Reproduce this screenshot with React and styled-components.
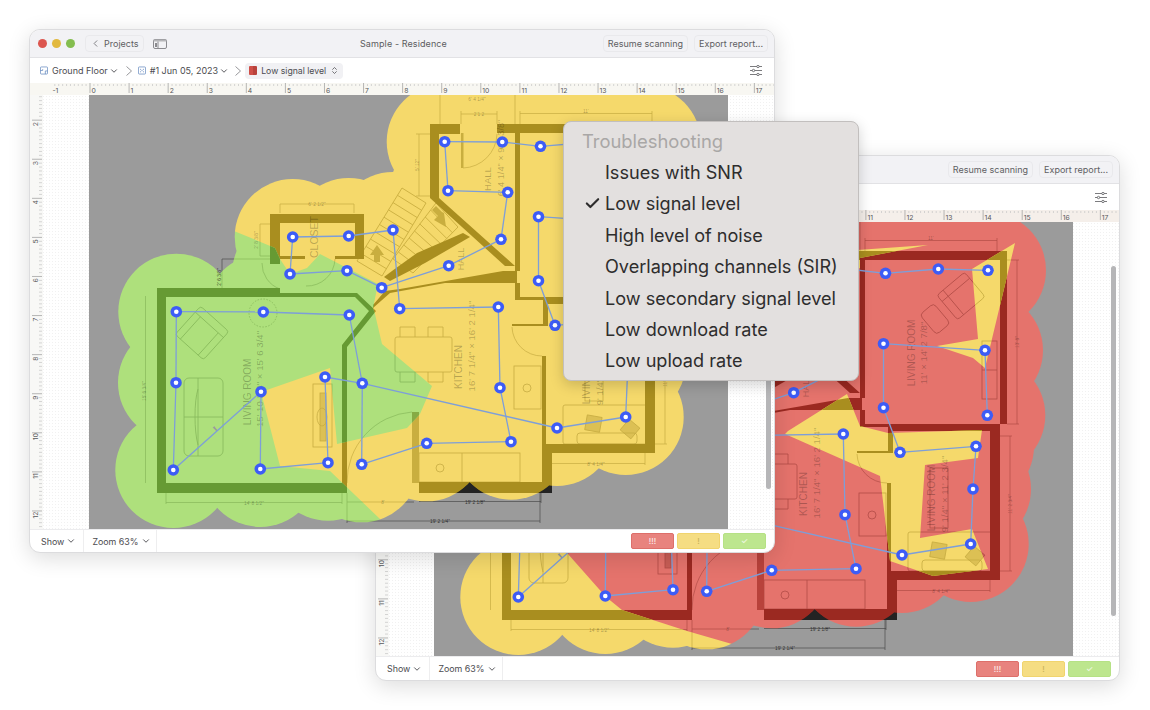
import React from "react";
import styled, { createGlobalStyle } from "styled-components";
import { ChevronLeft, ChevronDown, ChevronsUpDown, Check } from "lucide-react";

const GlobalStyle = createGlobalStyle`
  html, body {
    margin: 0;
    background: #fff;
    font-family: Inter, "Noto Sans", sans-serif;
    overflow: hidden;
  }
`;

const Desktop = styled.div`
  position: relative;
  width: 1150px;
  height: 710px;
`;

const Win = styled.div`
  position: absolute;
  left: ${(p) => p.$left}px;
  top: ${(p) => p.$top}px;
  width: ${(p) => p.$width}px;
  height: ${(p) => p.$height}px;
  display: flex;
  flex-direction: column;
  box-sizing: border-box;
  background: #fff;
  border: 1px solid #dcdcde;
  border-radius: 11px;
  overflow: hidden;
  box-shadow: 0 5px 22px rgba(0, 0, 0, 0.14);
`;

const TitleBar = styled.div`
  position: relative;
  flex: 0 0 27px;
  display: flex;
  align-items: center;
  padding: 0 6px 0 8px;
  background: #f2f2f5;
  border-bottom: 1px solid #e2e2e5;
`;

const Light = styled.span`
  width: 9px;
  height: 9px;
  border-radius: 50%;
  margin-right: 5px;
  background: ${(p) => p.$color};
`;

const BarButton = styled.div`
  display: flex;
  align-items: center;
  gap: 3px;
  height: 15px;
  margin-left: ${(p) => p.$gap || 0}px;
  margin-right: ${(p) => p.$after || 0}px;
  padding: 0 4px;
  border: 1px solid #e9e9ec;
  border-radius: 4px;
  font-size: 9px;
  color: #5e5e62;
  white-space: nowrap;
`;

const Title = styled.div`
  position: absolute;
  left: 330px;
  top: 8px;
  font-size: 9px;
  letter-spacing: 0.1px;
  color: #5c5c60;
`;

const Spacer = styled.div`
  flex: 1;
`;

const Toolbar = styled.div`
  flex: 0 0 ${(p) => p.$height}px;
  display: flex;
  align-items: center;
  padding: 0 12px 0 10px;
  background: #fff;
  font-size: 9px;
  color: #4c4c50;
  white-space: nowrap;
`;

const Crumb = styled.span`
  display: flex;
  align-items: center;
  gap: 4px;
`;

const CrumbArrow = styled.svg`
  width: 6px;
  height: 10px;
  margin: ${(p) => p.$margin};
  fill: none;
  stroke: #8c8c90;
  stroke-width: 0.9;
`;

const Pill = styled.span`
  display: flex;
  align-items: center;
  gap: 4px;
  height: 16px;
  padding: 0 4px;
  border-radius: 4px;
  background: #f1f1f4;
  font-size: 8.7px;
`;

const Swatch = styled.span`
  width: 8px;
  height: 9px;
  border-radius: 1px;
  background: linear-gradient(90deg, #cf4f48 0 55%, #b9423c 55%);
`;

const TightChevron = styled(ChevronDown)`
  margin-left: -3px;
`;

const RulerRow = styled.div`
  flex: 0 0 12px;
  background: ${(p) => p.$tint};
`;

const CanvasRow = styled.div`
  position: relative;
  flex: 0 0 434px;
  display: flex;
  background-color: #fff;
  background-image: radial-gradient(#f1f1f1 0.5px, transparent 0.6px);
  background-size: 3px 3px;
`;

const VerticalStrip = styled.div`
  flex: 0 0 13px;
  background: #f8f8f6;
`;

const PlanSlot = styled.div`
  margin-left: ${(p) => p.$gap}px;
  width: 639px;
  height: 434px;
`;

const ScrollThumb = styled.div`
  position: absolute;
  right: 3px;
  top: ${(p) => p.$top}px;
  width: 5px;
  height: ${(p) => p.$height}px;
  border-radius: 3px;
  background: #b6b6b8;
`;

const Footer = styled.div`
  flex: 1;
  display: flex;
  align-items: center;
  padding-right: 8px;
  border-top: 1px solid #ececee;
  font-size: 8.9px;
  color: #4c4c50;
`;

const FooterCell = styled.div`
  display: flex;
  align-items: center;
  gap: 2px;
  height: 100%;
  padding: 0 ${(p) => p.$pad}px 0 ${(p) => p.$left}px;
  border-right: 1px solid #eeeeef;
`;

const Legend = styled.div`
  width: 43px;
  height: 16px;
  margin-left: 3px;
  display: flex;
  align-items: center;
  justify-content: center;
  box-sizing: border-box;
  border: 1px solid ${(p) => p.$edge};
  border-radius: 2px;
  background: ${(p) => p.$color};
  color: ${(p) => p.$ink};
  font-size: 8px;
  font-weight: 500;
`;

const Menu = styled.div`
  position: absolute;
  left: 563px;
  top: 121px;
  width: 296px;
  height: 260px;
  box-sizing: border-box;
  padding: 4px 0 0 19px;
  background: #e3e0df;
  border: 1px solid #c2bfbe;
  border-radius: 8px;
  box-shadow: 0 4px 14px rgba(0, 0, 0, 0.18);
  font-size: 18.1px;
  color: #2e2d2d;
`;

const MenuHead = styled.div`
  height: 31px;
  line-height: 30px;
  margin-left: -1px;
  font-size: 18.4px;
  color: #a9a7a6;
`;

const MenuItem = styled.div`
  position: relative;
  height: 31.4px;
  line-height: 31.4px;
  padding-left: 22px;
  white-space: nowrap;
`;

const Tick = styled(Check)`
  position: absolute;
  left: 1px;
  top: 7px;
`;

const nodes = {
  A: [444.7, 140.7], B: [502.3, 141], C: [540.5, 145.3], D: [593.3, 141], E: [643, 142.3],
  F: [448, 189.7], G: [507.7, 191.3], H: [538.5, 215.7], I: [640, 222.3], J: [501, 238.3],
  K: [448.7, 264.7], L: [538.5, 279.7], M: [642.3, 287.3], N: [498.3, 306], O: [399.7, 307.7],
  P: [381.7, 286.7], Q: [393, 229], R: [348.7, 235], S: [292.7, 236], T: [290, 273],
  U: [347, 269.7], V: [176.3, 310.7], W: [263.3, 311], X: [349.3, 314], Y: [176, 381.7],
  Z: [261, 390.7], a: [173.3, 469], b: [260.3, 468], c: [325, 376], d: [362.3, 382.3],
  e: [328, 461.7], f: [361.7, 463.3], g: [426.7, 442.3], h: [511, 440.7], i: [500, 386.7],
  j: [555, 324.3], k: [631, 318.3], l: [628, 361], m: [625.7, 416], n: [557, 427],
};

const edges = "AB BC CD DE AF FG GJ JK KP PU UT TS SR RQ QO ON Ni ih hg gf fd dc ce eb bZ Za aY YV VW WX Xd dn nm ml lk kj jL LH HI IM".split(" ");

// inside of the house, where the node circles leave a gap
const fillers = [[440, 365], [585, 370], [590, 250]];

const tones = {
  gray: { fill: "#9b9b9b", wall: "#232323", line: "#4a4a4a", soft: "#555" },
  yellow: { fill: "#f5d96b", wall: "#a98e1f", line: "#c7ac42", soft: "#c9ae3f" },
  green: { fill: "#aee07c", wall: "#669a33", line: "#86b85a", soft: "#86ab45" },
  red: { fill: "#e5736c", wall: "#9b2921", line: "#b24c46", soft: "#b8423b" },
};

const walls = [
  "M157 287H280V292H357L376 310L347 346V492H157ZM166 296V482H342V344L369 310L355 296Z",
  "M270 213H364V258H335V255H355V222H280V255H305V258H280V263H270Z",
  "M430 123H460V133H439V197L515 265H505L430 197Z",
  "M497 123H662V132H520V270L517 270V282H445L390 292L373 307V304L385 290L400 288L503 270H515V132H497Z",
  "M515 282H520V296H662V132H655V303H548V325H512V323H543V299H515Z",
  "M645 303H655V452H552V492H542V355H546V443H645Z",
  "M419 481H542V492H419Z",
  "M384 276L392 270L417 252L463 232L470 236L425 262L390 280Z",
];

const bars = [
  "M412 411H419V482H412Z",
  "M461 132H463.500V167H461Z",
];

const doors = [
  "M347 482A70 70 0 0 1 412 411",
  "M463 167A35 35 0 0 0 497 133",
  "M512 326A30 30 0 0 0 542 355",
  "M306 285A28 28 0 0 0 335 258",
  "M262 262A27 27 0 0 0 280 288",
];

const dims = [
  { d: "M280 203H354M280 203V212M354 203V212", x: 317, y: 205, label: `6' 2 1/2"` },
  { d: "M260 223V255M260 223H270M260 255H270", x: 258, y: 239, label: `2' 8 3/8"`, rot: true },
  { d: "M222 258V292M222 258H280", x: 221, y: 276, label: `2' 6 3/8"`, rot: true, dark: true },
  { d: "M145.500 295V482", x: 146, y: 390, label: `15' 6 3/4"`, rot: true },
  { d: "M166 501.500H342M166 492V503M342 492V503", x: 254, y: 503.500, label: `14' 8 1/2"` },
  { d: "M347 501H414", x: 383, y: 503, label: `8'` },
  { d: "M347 520H540M347 492V522M540 492V522", x: 440, y: 522, label: `19' 2 1/4"`, dark: true },
  { d: "M419 500.500H541M541 492V502", x: 475, y: 502.500, label: `19' 2 1/8"`, dark: true },
  { d: "M546 462.500H645M546 452V464M645 452V464", x: 596, y: 464.500, label: `8' 4 1/4"` },
  { d: "M520 112.500H652M520 110V123M652 110V123", x: 586, y: 112, label: `11'` },
  { d: "M461 113H497M461 110V123M497 110V123", x: 479, y: 115, label: `2'1 2` },
  { d: "M440 94V123M515 94V123", x: 477, y: 100, label: `6' 4 1/4"` },
  { d: "M419 133V195M416 133H430M416 195H430", x: 419, y: 164, label: `5' 12"`, rot: true },
  { d: "M672 132V296M662 132H674M662 296H674", x: 674, y: 214, label: `13' 8"`, rot: true },
  { d: "M665 308V443M655 308H667M655 443H667", x: 667, y: 376, label: `11' 2 3/4"`, rot: true },
];

const labels = [
  { x: 251, y: 391, size: 10, text: "LIVING ROOM" },
  { x: 263, y: 378, size: 9.600, text: `15' 10 3/4" × 15' 6 3/4"` },
  { x: 318, y: 236, size: 10.500, text: "CLOSET" },
  { x: 491, y: 178, size: 9.500, text: "HALL" },
  { x: 504, y: 157, size: 9.200, text: `6' 4 1/4" × 9' 4 3/8"` },
  { x: 464, y: 258, size: 9, text: "HALL" },
  { x: 462, y: 366, size: 10, text: "KITCHEN" },
  { x: 475, y: 345, size: 9.600, text: `16' 7 1/4" × 16' 2 1/4"` },
  { x: 570, y: 225, size: 10, text: "LIVING ROOM" },
  { x: 582, y: 225, size: 9.600, text: `11' × 14' 2 7/8"` },
  { x: 590, y: 370, size: 10, text: "LIVING ROOM" },
  { x: 603, y: 366, size: 9.600, text: `9' 1/4" × 11' 2 3/4"` },
];

const stairRun = (a, b, c, d, steps) => {
  let out = `M${a}L${b}L${c}L${d}Z`;
  for (let s = 1; s < steps; s++) {
    const t = s / steps;
    const p = [a[0] + (d[0] - a[0]) * t, a[1] + (d[1] - a[1]) * t];
    const q = [b[0] + (c[0] - b[0]) * t, b[1] + (c[1] - b[1]) * t];
    out += `M${p}L${q}`;
  }
  return out;
};

const stairs = [
  stairRun([402, 187], [426, 202], [382, 275], [357, 260], 10),
  stairRun([436, 202], [458, 226], [413, 272], [393, 258], 8),
];

const Furniture = ({ color }) => (
  <g fill="none" stroke={color} strokeWidth="0.8">
    <g transform="rotate(42 202 332)">
      <rect x="183" y="313" width="38" height="38" rx="3" />
      <path d="M183 321H221M190 321V351M214 321V351" />
    </g>
    <circle cx="263" cy="312" r="14" strokeDasharray="1.500 1.500" />
    <rect x="184" y="377" width="39" height="78" rx="5" />
    <path d="M184 416H223M198 377V455M198 388C194 400 194 430 198 444" />
    <rect x="313" y="383" width="19" height="63" />
    <rect x="320" y="392" width="6" height="48" fill={color} fillOpacity="0.55" />
    <ellipse cx="322" cy="416" rx="5" ry="9" />
    <rect x="395" y="336" width="57" height="35" rx="2" />
    <path d="M400 336V326H415V336M428 336V326H443V336M400 371V381H415V371M428 371V381H443V371" />
    <rect x="514" y="365" width="27" height="43" />
    <circle cx="527" cy="387" r="4" />
    <rect x="419" y="452" width="101" height="29" />
    <path d="M462 452V481" />
    <circle cx="440" cy="467" r="4" />
    <rect x="563" y="404" width="84" height="39" rx="2" />
    <rect x="577" y="432" width="60" height="11" rx="3" />
    <rect x="586" y="415" width="15" height="15" transform="rotate(10 593 422)" fill={color} fillOpacity="0.55" />
    <rect x="623" y="421" width="14" height="14" transform="rotate(40 630 428)" fill={color} fillOpacity="0.55" />
    <rect x="585" y="340" width="18" height="60" />
    <g transform="rotate(-40 616 168)">
      <rect x="598" y="152" width="36" height="32" rx="3" />
      <path d="M598 160H634M606 152V184" />
    </g>
    <rect x="581" y="178" width="18" height="26" rx="4" transform="rotate(-40 590 191)" />
    <rect x="637" y="213" width="15" height="58" />
    <path d="M637 242H652" />
  </g>
);

const Plan = ({ tone }) => {
  const t = tones[tone];
  return (
    <g>
      <g fill="none" stroke={t.line} strokeWidth="0.7">
        {dims.map((item) => (
          <path key={item.d} d={item.d} />
        ))}
        {doors.map((d) => (
          <path key={d} d={d} />
        ))}
      </g>
      <g fill="none" stroke={t.soft} strokeWidth="0.9">
        {stairs.map((d) => (
          <path key={d} d={d} />
        ))}
      </g>
      <path d="M377 244L384 254H380V261H374V254H370Z" fill={t.soft} />
      <path d="M444 212L446 226L434 219L438 215L432 209L436 205L442 211Z" fill={t.soft} />
      <Furniture color={t.line} />
      {walls.map((d) => (
        <path key={d} d={d} fill={t.wall} fillRule="evenodd" />
      ))}
      {bars.map((d) => (
        <path key={d} d={d} fill={t.soft} />
      ))}
      <path d="M458 492L470 482L482 492ZM540 492L551 485V492Z" fill="#232323" />
    </g>
  );
};

// room names and measures are printed once, over all the colour layers
const PlanText = ({ shown }) => (
  <g fontFamily="'Liberation Sans', Arial, sans-serif" fill="#000" textAnchor="middle">
    {labels.filter((l) => shown(l.x, l.y)).map((l) => (
      <text key={l.text + l.x} x={l.x} y={l.y} fontSize={l.size} fillOpacity="0.25" transform={`rotate(-90 ${l.x} ${l.y})`}>
        {l.text}
      </text>
    ))}
    {dims.filter((item) => shown(item.x, item.y)).map((item) => (
      <text
        key={item.label + item.x}
        x={item.x}
        y={item.y}
        fontSize="4.800"
        fillOpacity={item.dark ? 0.7 : 0.32}
        transform={item.rot ? `rotate(-90 ${item.x} ${item.y})` : undefined}
      >
        {item.label}
      </text>
    ))}
  </g>
);

const FloorMap = ({ id, base, over, regions, shown }) => (
  <svg width="639" height="434" viewBox="89 94 639 434" style={{ display: "block" }}>
    <defs>
      <clipPath id={`${id}-cover`}>
        {Object.keys(nodes).map((k) => (
          <circle key={k} cx={nodes[k][0]} cy={nodes[k][1]} r="58" />
        ))}
        {fillers.map((f) => (
          <circle key={f[0]} cx={f[0]} cy={f[1]} r="40" />
        ))}
      </clipPath>
      <clipPath id={`${id}-region`}>
        {regions.map((r) => (
          <polygon key={r} points={r} />
        ))}
      </clipPath>
    </defs>
    <rect x="89" y="94" width="639" height="434" fill={tones.gray.fill} />
    <Plan tone="gray" />
    <g clipPath={`url(#${id}-cover)`}>
      <rect x="89" y="94" width="639" height="434" fill={tones[base].fill} />
      <Plan tone={base} />
      <g clipPath={`url(#${id}-region)`}>
        <rect x="89" y="94" width="639" height="434" fill={tones[over].fill} />
        <Plan tone={over} />
      </g>
    </g>
    <PlanText shown={shown} />
    <g stroke="#7d9ed9" strokeWidth="1.300">
      {edges.map((e) => (
        <line key={e} x1={nodes[e[0]][0]} y1={nodes[e[0]][1]} x2={nodes[e[1]][0]} y2={nodes[e[1]][1]} />
      ))}
    </g>
    {Object.keys(nodes).map((k) => (
      <g key={k}>
        <circle cx={nodes[k][0]} cy={nodes[k][1]} r="5.800" fill="#3d5cf6" />
        <circle cx={nodes[k][0]} cy={nodes[k][1]} r="2.300" fill="#fff" />
      </g>
    ))}
  </svg>
);

const unit = 39.08;
const range = (a, b) => Array.from({ length: b - a + 1 }, (_, i) => a + i);

const TopRuler = ({ width, origin }) => (
  <svg width={width} height="12" style={{ display: "block" }}>
    {range(-9, 180).map((n) => {
      const x = origin + (n * unit) / 10;
      const major = n % 10 === 0;
      return (
        <line key={n} x1={x} y1={major ? 0 : 1} x2={x} y2={major ? 10 : 3} stroke={major ? "#9a9a9a" : "#c4c4c4"} strokeWidth="0.7" />
      );
    })}
    {range(-1, 17).map((n) => (
      <text key={n} x={origin + n * unit + 1.500} y="10" fontSize="6.800" fill="#57575a" fontFamily="Inter, sans-serif">
        {n}
      </text>
    ))}
  </svg>
);

const SideRuler = ({ height, offset }) => (
  <svg width="13" height={height} style={{ display: "block" }}>
    {range(14, 130).map((n) => {
      const y = offset + (n * unit) / 10;
      const major = n % 10 === 0;
      return (
        <line key={n} x1={major ? 2 : 9} y1={y} x2="12" y2={y} stroke={major ? "#9a9a9a" : "#c4c4c4"} strokeWidth="0.7" />
      );
    })}
    {range(2, 12).map((n) => {
      const y = offset + n * unit + 4;
      return (
        <text key={n} x="8.500" y={y} fontSize="6.800" fill="#57575a" fontFamily="Inter, sans-serif" textAnchor="middle" transform={`rotate(-90 8.500 ${y})`}>
          {n}
        </text>
      );
    })}
  </svg>
);

const SidebarIcon = () => (
  <svg width="14" height="10" viewBox="0 0 14 10">
    <rect x="0.500" y="0.500" width="13" height="9" rx="1.500" fill="#f2f2f5" stroke="#8b8b8f" />
    <rect x="0.500" y="0.500" width="13" height="2" fill="#b5b5b8" />
    <rect x="2" y="4" width="2" height="4" fill="#8b8b8f" />
    <line x1="5" y1="2.500" x2="5" y2="9.500" stroke="#8b8b8f" />
  </svg>
);

const FloorIcon = () => (
  <svg width="8" height="9" viewBox="0 0 9 9" fill="none" stroke="#5f84bd" strokeWidth="0.800">
    <rect x="0.500" y="0.500" width="8" height="8" rx="1" />
    <path d="M0.500 4.500H3V3M6 8.500V5H8.500" />
  </svg>
);

const ScanIcon = () => (
  <svg width="8" height="9" viewBox="0 0 9 9" fill="#5f84bd">
    <rect x="0.500" y="0.500" width="8" height="8" rx="1" fill="none" stroke="#5f84bd" strokeWidth="0.800" />
    <circle cx="3" cy="3" r="0.600" />
    <circle cx="6" cy="3" r="0.600" />
    <circle cx="4.500" cy="4.500" r="0.600" />
    <circle cx="3" cy="6" r="0.600" />
    <circle cx="6" cy="6" r="0.600" />
  </svg>
);

const FilterIcon = () => (
  <svg width="12" height="11" viewBox="0 0 12 11" fill="#fff" stroke="#5b5b5e" strokeWidth="0.800">
    <path d="M0 1.500H12M0 5.500H12M0 9.500H12" />
    <circle cx="8" cy="1.500" r="1.200" />
    <circle cx="3.500" cy="5.500" r="1.200" />
    <circle cx="8" cy="9.500" r="1.200" />
  </svg>
);

const Arrow = ({ margin }) => (
  <CrumbArrow viewBox="0 0 6 10" $margin={margin}>
    <path d="M0.500 0.500L5.500 5L0.500 9.500" />
  </CrumbArrow>
);

const Window = ({ left, top, width, height, toolbar, gap, thumbTop, thumbHeight, tint, id, base, over, regions, shown }) => (
  <Win $left={left} $top={top} $width={width} $height={height}>
    <TitleBar>
      <Light $color="#dc564f" />
      <Light $color="#e2b93f" />
      <Light $color="#84bd4f" />
      <BarButton $gap={5} $after={9}>
        <ChevronLeft size={11} color="#77777b" />
        Projects
      </BarButton>
      <SidebarIcon />
      <Title>Sample - Residence</Title>
      <Spacer />
      <BarButton>Resume scanning</BarButton>
      <BarButton $gap={6}>Export report...</BarButton>
    </TitleBar>
    <Toolbar $height={toolbar}>
      <Crumb>
        <FloorIcon />
        Ground Floor
        <TightChevron size={10} strokeWidth={2.200} />
      </Crumb>
      <Arrow margin="0 6px 0 7px" />
      <Crumb>
        <ScanIcon />
        #1 Jun 05, 2023
        <TightChevron size={10} strokeWidth={2.200} />
      </Crumb>
      <Arrow margin="0 4px 0 6px" />
      <Pill>
        <Swatch />
        Low signal level
        <ChevronsUpDown size={9} strokeWidth={2} />
      </Pill>
      <Spacer />
      <FilterIcon />
    </Toolbar>
    <RulerRow $tint={tint}>
      <TopRuler width={width} origin={60} />
    </RulerRow>
    <CanvasRow>
      <VerticalStrip>
        <SideRuler height={434} offset={-53} />
      </VerticalStrip>
      <PlanSlot $gap={gap}>
        <FloorMap id={id} base={base} over={over} regions={regions} shown={shown} />
      </PlanSlot>
      <ScrollThumb $top={thumbTop} $height={thumbHeight} />
    </CanvasRow>
    <Footer>
      <FooterCell $left={11} $pad={7}>
        Show
        <ChevronDown size={10} strokeWidth={2.200} />
      </FooterCell>
      <FooterCell $left={8} $pad={5}>
        Zoom 63%
        <ChevronDown size={10} strokeWidth={2.200} />
      </FooterCell>
      <Spacer />
      <Legend $color="#e8837e" $edge="#dd6f6a" $ink="#fbe9e8">!!!</Legend>
      <Legend $color="#f5dd83" $edge="#f0d46e" $ink="#c9b35c">!</Legend>
      <Legend $color="#bde68e" $edge="#b6e185" $ink="#eef8e2">✓</Legend>
    </Footer>
  </Win>
);

const greenZone = [
  "234,230 275,247 280,258 290,273 307,267 320,253 378,283 373,307 375,313 382,343 432,385 420,413 407,427 337,443 330,367 261,391 280,465 330,470 380,518 385,560 60,560 60,230",
];

const yellowZones = [
  "583,117 515,130 515,140 400,180 400,130",
  "670,115 627,141 633,211 592,218 628,230 640,240",
  "443,303 502,266 515,298 543,305 637,302 633,330 580,337 575,410 627,401 643,441 588,448 545,433 535,348 440,306",
  "60,250 223,426 261,469 277,482 342,503 387,516 387,600 60,600",
];

const menuItems = [
  "Issues with SNR",
  "Low signal level",
  "High level of noise",
  "Overlapping channels (SIR)",
  "Low secondary signal level",
  "Low download rate",
  "Low upload rate",
];

const App = () => (
  <Desktop>
    <GlobalStyle />
    <Window
      left={375}
      top={155}
      width={745}
      height={526}
      toolbar={26}
      gap={45}
      thumbTop={44}
      thumbHeight={350}
      tint="#f5efea"
      id="back"
      base="red"
      over="yellow"
      regions={yellowZones}
      shown={(x, y) => !(x < 430 && y < 426)}
    />
    <Window
      left={29}
      top={29}
      width={746}
      height={524}
      toolbar={25}
      gap={46}
      thumbTop={44}
      thumbHeight={350}
      tint="#f8f7f2"
      id="front"
      base="yellow"
      over="green"
      regions={greenZone}
      shown={(x, y) => !(x > 563 && y < 360 && y > 121)}
    />
    <Menu>
      <MenuHead>Troubleshooting</MenuHead>
      {menuItems.map((item) => (
        <MenuItem key={item}>
          {item === "Low signal level" && <Tick size={17} strokeWidth={3} color="#2e2d2d" />}
          {item}
        </MenuItem>
      ))}
    </Menu>
  </Desktop>
);

export default App;
